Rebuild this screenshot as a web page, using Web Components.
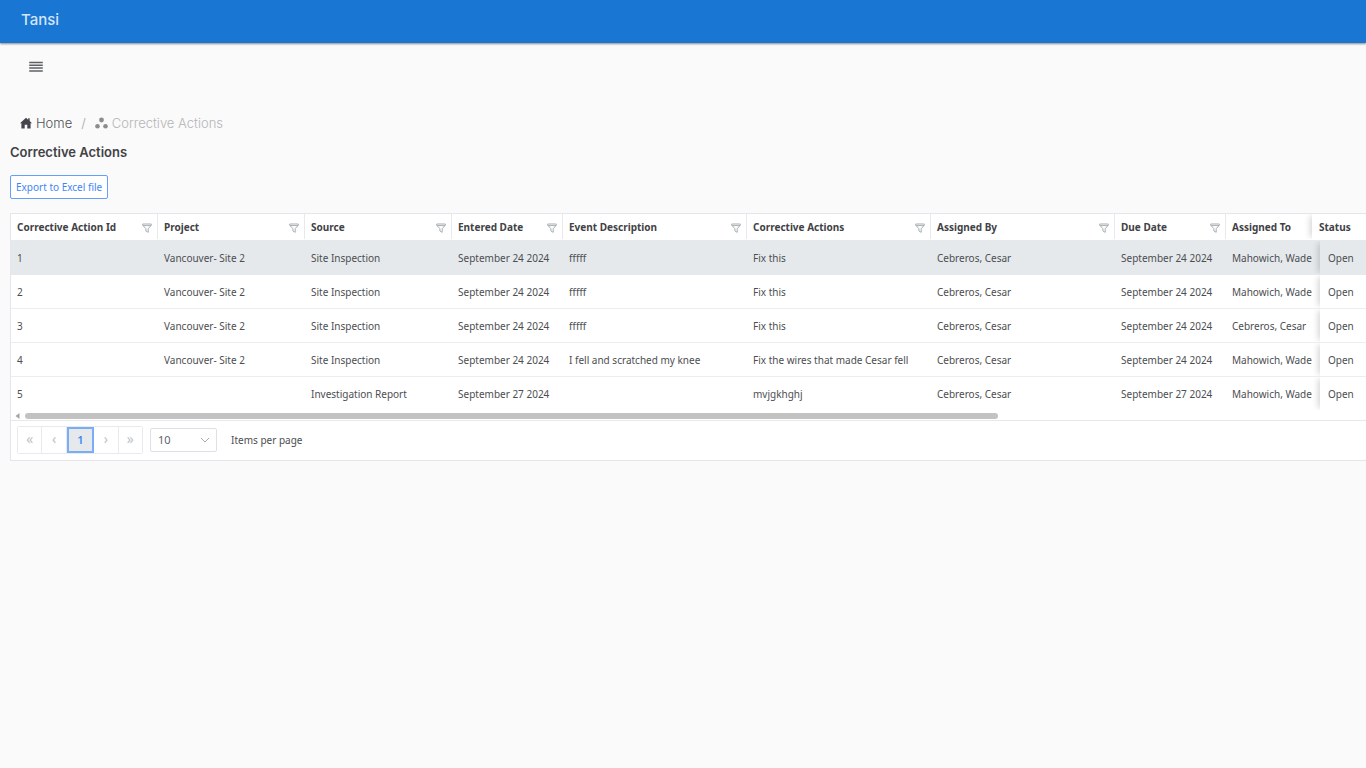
<!DOCTYPE html>
<html lang="en">
<head>
<meta charset="utf-8">
<meta name="viewport" content="width=device-width, initial-scale=1">
<title>Tansi - Corrective Actions</title>
<style>
  body { margin: 0; background: #fafafa; color: #4c4e51; font: 10px/16px "Noto Sans", "Open Sans", sans-serif; overflow-x: hidden; }
</style>
</head>
<body>
<tansi-page></tansi-page>
<script>
const define = (name, html, init) => {
  const template = document.createElement('template');
  template.innerHTML = html;
  customElements.define(name, class extends HTMLElement {
    constructor() {
      super();
      this.attachShadow({ mode: 'open' }).append(template.content.cloneNode(true));
      if (init) init(this.shadowRoot, this);
    }
  });
};

define('tansi-header', `
<style>
  :host { display: block; background: #1976d2; box-shadow: 0 1px 2px rgba(0,0,0,.45); padding: 10px 21px 13px; }
  a { display: block; width: fit-content; color: #d3e5fa; text-decoration: none; font: 500 15px/20px Inter, sans-serif; }
</style>
<a href="#"><slot></slot></a>`);

define('menu-button', `
<style>
  :host { display: block; padding: 16px 28px; }
  button { display: block; border: 0; padding: 0; background: none; }
  svg { display: block; }
</style>
<button type="button" aria-label="Menu"><svg width="16" height="16" viewBox="0 0 16 16"><path d="M1.200 3.500h13.600M1.200 6.300h13.600M1.200 9.100h13.600M1.200 11.900h13.600" stroke="#5f6265" stroke-width="1.500"/></svg></button>`);

define('bread-crumbs', `
<style>
  :host { display: block; padding: 0 20px; font: 300 13px/20px Inter, sans-serif; }
  nav, a, span { display: flex; align-items: center; }
  a { gap: 4px; color: #4f5155; text-decoration: none; }
  a[aria-current] { color: #b4b5b8; }
  .sep { padding: 0 9px; color: #a4a6a9; }
</style>
<nav aria-label="Breadcrumb">
  <a href="#"><svg width="12" height="12" viewBox="0 0 12 12"><path d="M6 .8 0 6.2h1.4v5.3h3.3V7.8h2.6v3.7h3.3V6.2H12L9.7 4.1V1.3H8.2v1.5z" fill="#45434b"/></svg>Home</a>
  <span class="sep">/</span>
  <a href="#" aria-current="page"><svg width="13" height="12" viewBox="0 0 13 12" fill="#8d8d90"><circle cx="6.5" cy="3" r="2.4"/><circle cx="2.5" cy="9.2" r="2.3"/><circle cx="10.5" cy="9.2" r="2.3"/></svg>Corrective Actions</a>
</nav>`);

define('outline-button', `
<style>
  :host { display: inline-block; }
  button { display: block; height: 24px; padding: 0 5px; border: 1px solid #62a0fb; border-radius: 2px; background: #fff; color: #3f86f5; font: 10px/16px "Noto Sans", sans-serif; }
</style>
<button type="button"><slot></slot></button>`);

const columns = [
  ['Corrective Action Id', 'm'], ['Project', 'm'], ['Source', 'm'], ['Entered Date', 's'],
  ['Event Description', 'l'], ['Corrective Actions', 'l'], ['Assigned By', 'l'], ['Due Date', 's'],
  ['Assigned To', 'rest'], ['Status', 'pin']
];
const site = 'Vancouver- Site 2', cesar = 'Cebreros, Cesar', wade = 'Mahowich, Wade';
const rows = [
  ['1', site, 'Site Inspection', 'September 24 2024', 'fffff', 'Fix this', cesar, 'September 24 2024', wade, 'Open'],
  ['2', site, 'Site Inspection', 'September 24 2024', 'fffff', 'Fix this', cesar, 'September 24 2024', wade, 'Open'],
  ['3', site, 'Site Inspection', 'September 24 2024', 'fffff', 'Fix this', cesar, 'September 24 2024', cesar, 'Open'],
  ['4', site, 'Site Inspection', 'September 24 2024', 'I fell and scratched my knee', 'Fix the wires that made Cesar fell', cesar, 'September 24 2024', wade, 'Open'],
  ['5', '', 'Investigation Report', 'September 27 2024', '', 'mvjgkhghj', cesar, 'September 27 2024', wade, 'Open']
];

define('filter-button', `
<style>
  :host { display: block; padding-top: 2px; }
  button { display: block; border: 0; padding: 0; background: none; }
  svg { display: block; }
</style>
<button type="button" aria-label="Filter"><svg width="10" height="10" viewBox="0 0 10 10" fill="none" stroke="#a9afb4"><path d="M.7 1h8.6v1.2L6.2 5.7v3.6L3.9 8V5.7L.7 2.2zM1 2.6h8"/></svg></button>`);

define('action-table', `
<style>
  :host { display: block; }
  table, thead, tbody { display: block; }
  tr { display: flex; }
  th, td { box-sizing: border-box; display: flex; align-items: center; padding: 0 6px; flex: none; white-space: nowrap; }
  thead tr { height: 27px; padding-bottom: 1px; border-bottom: 1px solid #e5e9ec; box-sizing: border-box; }
  th { justify-content: space-between; padding-right: 5px; border-right: 1px solid #e7e9eb; font: 700 10px/16px "Noto Sans", sans-serif; color: #3f4245; }
  td { height: 33px; }
  tbody tr { border-bottom: 1px solid #ebedef; }
  tbody tr:first-child { background: #e5e9ec; border-color: #e5e9ec; }
  tbody tr:last-child { border-color: #fff; }
  .m { width: 147px; } .s { width: 111px; } .l { width: 184px; }
  .rest { flex: 1; min-width: 0; border-right: 0; }
  .pin { width: 54px; border-right: 0; box-shadow: -4px 0 6px -2px rgba(0,0,0,.16); clip-path: inset(0 0 0 -10px); }
  td.pin { width: 46px; padding-left: 8px; }
  th.pin { padding-left: 7px; }
</style>
<table><thead><tr></tr></thead><tbody></tbody></table>`, root => {
  const head = root.querySelector('thead tr');
  columns.forEach(([label, size]) => {
    const th = document.createElement('th');
    th.scope = 'col';
    th.className = size;
    th.textContent = label;
    if (size !== 'rest' && size !== 'pin') th.append(document.createElement('filter-button'));
    head.append(th);
  });
  rows.forEach(cells => {
    const tr = root.querySelector('tbody').appendChild(document.createElement('tr'));
    cells.forEach((text, i) => {
      const td = tr.appendChild(document.createElement('td'));
      td.className = columns[i][1];
      td.textContent = text;
    });
  });
});

define('scroll-track', `
<style>
  :host { display: flex; align-items: center; gap: 5px; height: 9px; padding-left: 4px; border-bottom: 1px solid #e6e8ea; }
  div { width: 72%; height: 6px; border-radius: 3px; background: #c2c2c2; }
</style>
<svg width="5" height="6" viewBox="0 0 5 6"><path d="M4.500 0v6L.5 3z" fill="#a5a5a5"/></svg><div></div>`);

define('table-pager', `
<style>
  :host { display: flex; align-items: center; padding: 5px 6px 6px; }
  .pages { box-sizing: border-box; width: 126px; display: flex; border: 1px solid #e8eaec; border-radius: 2px; }
  button { box-sizing: border-box; flex: 1; height: 26px; padding: 0 0 2px; border: 0; border-right: 1px solid #e8eaec; background: #fff; color: #b8bec5; font: 14px/20px "Open Sans", sans-serif; }
  button:last-child { border-right: 0; }
  button[aria-current] { border: 2px solid #79adf8; background: #e5e9ec; color: #3f86f5; font: 600 11px/16px "Noto Sans", sans-serif; padding: 0; }
  label { display: flex; align-items: center; gap: 14px; }
  .box { display: grid; align-items: center; margin-left: 7px; }
  select, svg { grid-area: 1 / 1; }
  select { appearance: none; box-sizing: border-box; width: 67px; height: 24px; padding: 0 7px; border: 1px solid #dde0e4; border-radius: 2px; background: #fff; color: #5f6368; font: 11px/16px "Noto Sans", sans-serif; }
  svg { justify-self: end; margin-right: 7px; pointer-events: none; }
</style>
<div class="pages">
  <button type="button" aria-label="First page">«</button><button type="button" aria-label="Previous page">‹</button><button type="button" aria-current="page">1</button><button type="button" aria-label="Next page">›</button><button type="button" aria-label="Last page">»</button>
</div>
<label for="size"><span class="box"><select id="size"><option>10</option><option>20</option><option>50</option></select><svg width="10" height="10" viewBox="0 0 10 10"><path d="m1 3 4 4 4-4" fill="none" stroke="#a5aab0"/></svg></span>Items per page</label>`);

define('tansi-page', `
<style>
  :host { display: block; }
  main { padding: 22px 0 0 10px; }
  bread-crumbs { margin-left: -10px; }
  h1 { margin: 10px 0 14px; font: 600 13px/18px Inter, sans-serif; color: #414246; }
  .grid { margin-top: 14px; border: 1px solid #e4e6ec; border-right: 0; background: #fff; }
</style>
<tansi-header>Tansi</tansi-header>
<menu-button></menu-button>
<main>
  <bread-crumbs></bread-crumbs>
  <h1>Corrective Actions</h1>
  <outline-button>Export to Excel file</outline-button>
  <div class="grid"><action-table></action-table><scroll-track></scroll-track><table-pager></table-pager></div>
</main>`);
</script>
</body>
</html>
